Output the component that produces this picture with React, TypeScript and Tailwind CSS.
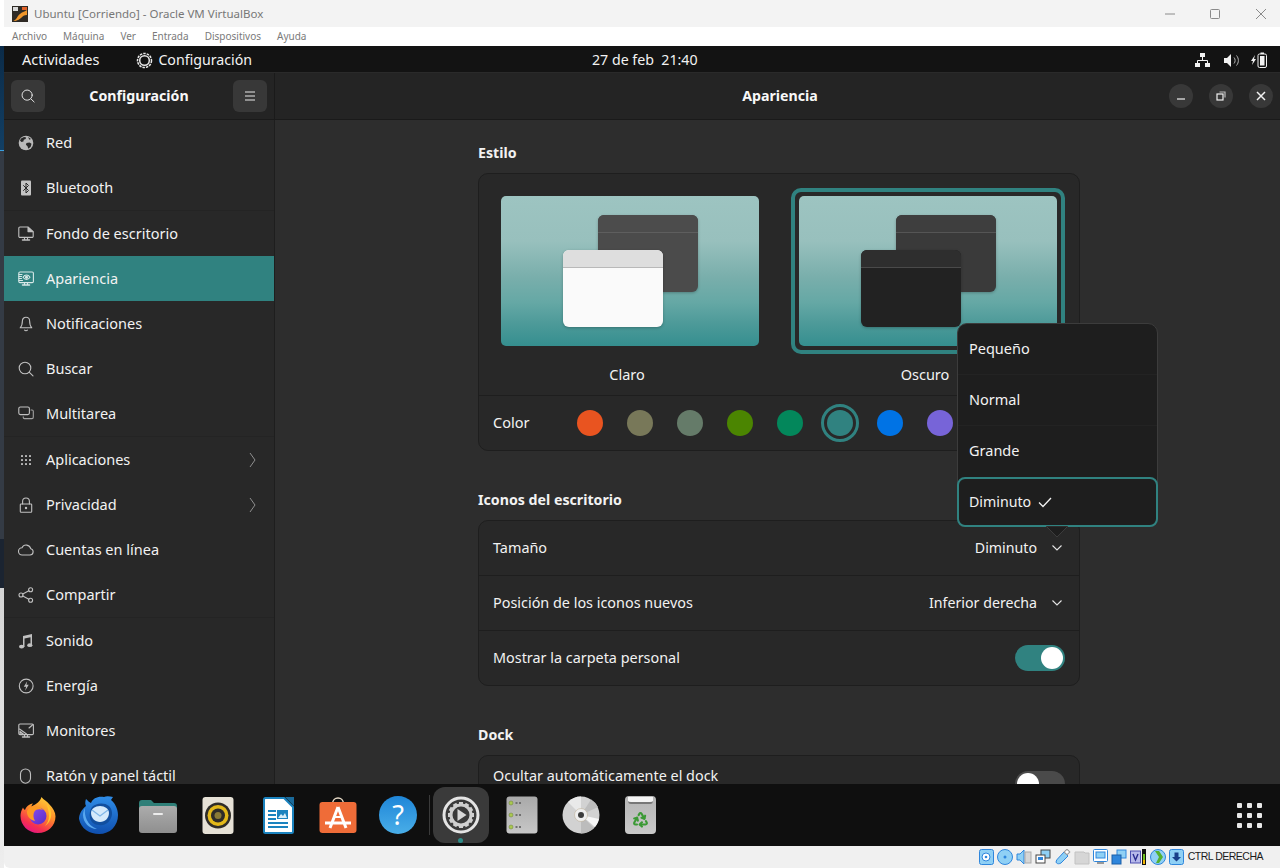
import { Recycle } from 'lucide-react';
import type { ReactNode } from 'react';

function Glyph({ children, size = 16 }: { children: ReactNode; size?: number }) {
  return (
    <svg width={size} height={size} viewBox="0 0 16 16" fill="none" stroke="currentColor" strokeWidth="1.1" strokeLinecap="round" strokeLinejoin="round">
      {children}
    </svg>
  );
}

const sideIcons: Record<string, ReactNode> = {
  red: (
    <>
      <circle cx="8" cy="8" r="7.3" fill="#b9b9b9" stroke="none" />
      <path d="M3 3.5l3-1.6 2.2.6-.6 1.6-1.8.6-.4 1.8-2 .6L2 5.6zM8.5 8l3-.6 2 1.4-.8 3-2.4 2-.8-2.6-1.6-1.4zM10 2l3 2-1.6.8z" fill="#282828" stroke="none" />
    </>
  ),
  bluetooth: (
    <>
      <rect x="3" y="0.5" width="10" height="15" rx="1" fill="#c4c4c4" stroke="none" />
      <path d="M5.5 5.5l5 5L8 13V3l2.5 2.5-5 5" stroke="#282828" strokeWidth="1" />
    </>
  ),
  fondo: (
    <>
      <path d="M9.5 1H2a1.2 1.2 0 0 0-1.2 1.2v8A1.2 1.2 0 0 0 2 11.4h12a1.2 1.2 0 0 0 1.2-1.2V6" />
      <path d="M10 1l5.2 4.6H10z" fill="currentColor" />
      <path d="M6.5 11.5v2M9.5 11.5v2" />
      <path d="M4.5 14h7" strokeWidth="1.5" />
    </>
  ),
  apariencia: (
    <>
      <rect x="0.8" y="1" width="14.6" height="10.6" rx="1.2" />
      <path d="M5 6.3c2-3 5-3 7 0-2 3-5 3-7 0z" />
      <circle cx="8.5" cy="6.3" r="1" fill="currentColor" />
      <path d="M1 3.5h3M1 5.5h2.5M1 7.5h2.5M1 9.5h3.5" />
      <path d="M4.5 14h7" strokeWidth="1.5" />
      <path d="M6.5 11.5v2M9.5 11.5v2" />
    </>
  ),
  bell: (
    <>
      <path d="M8 1.2a3.6 3.6 0 0 0-3.6 3.6c0 4-.9 5.7-2.2 7h11.6c-1.3-1.3-2.2-3-2.2-7A3.6 3.6 0 0 0 8 1.2z" />
      <path d="M6.6 14.2c.7.8 2.1.8 2.8 0" />
    </>
  ),
  buscar: (
    <>
      <circle cx="7" cy="7" r="5.8" />
      <path d="M11.4 11.4l3.6 3.4" />
    </>
  ),
  multi: (
    <>
      <rect x="0.8" y="1" width="10.6" height="7.6" rx="1.6" />
      <path d="M13 4h1a1.3 1.3 0 0 1 1.3 1.3v6a1.3 1.3 0 0 1-1.3 1.3H6.5A1.3 1.3 0 0 1 5.2 11.3V10.8" stroke="#a0a0a0" />
    </>
  ),
  apps: (
    <g fill="currentColor" stroke="none">
      {[4, 8, 12].flatMap((x) => [4, 8, 12].map((y) => <rect key={`${x}-${y}`} x={x - 1} y={y - 1} width="2" height="2" rx="0.4" />))}
    </g>
  ),
  lock: (
    <>
      <path d="M4.6 7V4.4a3.4 3.4 0 0 1 6.8 0V7" />
      <rect x="2.3" y="7" width="11.4" height="8.2" rx="0.8" />
      <circle cx="8" cy="11" r="1.2" fill="currentColor" stroke="none" />
    </>
  ),
  cloud: <path d="M4.2 13H12a3.2 3.2 0 0 0 .7-6.3A4.6 4.6 0 0 0 4 5.8 3.6 3.6 0 0 0 4.2 13z" />,
  share: (
    <>
      <circle cx="3" cy="8" r="2" />
      <circle cx="12.6" cy="2.8" r="2" />
      <circle cx="12.6" cy="13.2" r="2" />
      <path d="M4.8 7l6-3.2M4.8 9l6 3.2" />
    </>
  ),
  music: (
    <g fill="currentColor" stroke="none">
      <path d="M5 3l9-2v11h-1.5V4.2L6.5 5.5V14H5z" />
      <ellipse cx="3.6" cy="13.6" rx="2.6" ry="1.9" />
      <ellipse cx="11.8" cy="12.2" rx="2.6" ry="1.9" />
    </g>
  ),
  power: (
    <>
      <circle cx="8.2" cy="8" r="6.9" />
      <path d="M9.2 3.2L5.8 8.8h2.3l-1 4 3.6-6H8.4z" fill="currentColor" stroke="none" />
    </>
  ),
  monitor: (
    <>
      <rect x="0.8" y="1" width="14.6" height="10.6" rx="1.2" />
      <path d="M1.5 6l7 5M15 1.5L11 5M2 8.5l3.5 2.6H2z" />
      <path d="M4.5 14h7" strokeWidth="1.5" />
      <path d="M6.5 11.5v2M9.5 11.5v2" />
    </>
  ),
  mouse: <rect x="2.5" y="1" width="10" height="14.2" rx="5" />,
};

type SideItem = { label: string; icon: string; arrow?: boolean; active?: boolean; rule?: boolean };

const sideItems: SideItem[] = [
  { label: 'Red', icon: 'red' },
  { label: 'Bluetooth', icon: 'bluetooth', rule: true },
  { label: 'Fondo de escritorio', icon: 'fondo' },
  { label: 'Apariencia', icon: 'apariencia', active: true },
  { label: 'Notificaciones', icon: 'bell' },
  { label: 'Buscar', icon: 'buscar' },
  { label: 'Multitarea', icon: 'multi', rule: true },
  { label: 'Aplicaciones', icon: 'apps', arrow: true },
  { label: 'Privacidad', icon: 'lock', arrow: true },
  { label: 'Cuentas en línea', icon: 'cloud' },
  { label: 'Compartir', icon: 'share', rule: true },
  { label: 'Sonido', icon: 'music' },
  { label: 'Energía', icon: 'power' },
  { label: 'Monitores', icon: 'monitor' },
  { label: 'Ratón y panel táctil', icon: 'mouse' },
];

function Sidebar() {
  return (
    <aside className="flex w-[271px] shrink-0 flex-col overflow-hidden border-r border-[#1e1e1e] bg-[#282828]">
      {sideItems.map((item) => (
        <div key={item.label} className="shrink-0">
          <div className={`flex h-[45px] items-center pl-[14px] pr-[18px] text-[#f2f2f2] ${item.active ? 'bg-[#308280]' : ''}`}>
            <span className={`w-[28px] shrink-0 ${item.active ? 'text-[#d8e8e7]' : 'text-[#c0c0c0]'}`}>
              <Glyph>{sideIcons[item.icon]}</Glyph>
            </span>
            <span className="flex-1">{item.label}</span>
            {item.arrow && (
              <svg width="7" height="16" viewBox="0 0 7 16" fill="none" stroke="#8f8f8f" strokeWidth="1">
                <path d="M1 1l5 7-5 7" />
              </svg>
            )}
          </div>
          {item.rule && <div className="h-px bg-[#242424]" />}
        </div>
      ))}
    </aside>
  );
}

function PreviewWindow({ dark, back }: { dark: boolean; back?: boolean }) {
  const body = back ? (dark ? 'bg-[#3a3a3a]' : 'bg-[#4b4b4b]') : dark ? 'bg-[#222222]' : 'bg-[#fafafa]';
  const bar = back
    ? dark ? 'bg-[#3e3e3e] border-[#555555]' : 'bg-[#4c4c4c] border-[#5e5e5e]'
    : dark ? 'bg-[#2e2e2e] border-[#4a4a4a]' : 'bg-[#dedede] border-[#b9b9b9]';
  const place = back ? 'left-[97px] top-[19px]' : 'left-[62px] top-[54px]';
  return (
    <div className={`absolute h-[77px] w-[100px] overflow-hidden rounded-[6px] shadow-[0_1px_3px_rgba(0,0,0,0.25)] ${body} ${place}`}>
      <div className={`h-[18px] border-b ${bar}`} />
    </div>
  );
}

function StyleOption({ label, dark, selected }: { label: string; dark: boolean; selected?: boolean }) {
  return (
    <div className="w-[274px]">
      <div className={`flex h-[166px] items-center justify-center rounded-[10px] border-4 ${selected ? 'border-[#308280]' : 'border-transparent'}`}>
        <div className="relative h-[150px] w-[258px] rounded-[5px] bg-[linear-gradient(180deg,#9dc4c1_0%,#98c0bd_30%,#78aeab_55%,#65a8a5_71%,#4d9a99_85%,#358f8f_100%)]">
          <PreviewWindow dark={dark} back />
          <PreviewWindow dark={dark} />
        </div>
      </div>
      <div className="mt-[10px] pr-[6px] text-center leading-5 text-[#f2f2f2]">{label}</div>
    </div>
  );
}

const accents = ['bg-[#e95420]', 'bg-[#787859]', 'bg-[#657b69]', 'bg-[#4b8501]', 'bg-[#03875b]', 'bg-[#308280]', 'bg-[#0073e5]', 'bg-[#7764d8]', 'bg-[#b34cb3]', 'bg-[#da3450]'];

function Chevron() {
  return (
    <svg width="10" height="6" viewBox="0 0 10 6" fill="none" stroke="#e6e6e6" strokeWidth="1.1" className="ml-[15px] mr-[3px]">
      <path d="M0.5 0.5L5 5l4.5-4.5" />
    </svg>
  );
}

function Toggle({ on }: { on: boolean }) {
  return (
    <div className={`flex h-[26px] w-[50px] items-center rounded-full px-[2px] ${on ? 'justify-end bg-[#308280]' : 'justify-start bg-[#4a4a4a]'}`}>
      <div className="h-[22px] w-[22px] rounded-full bg-white" />
    </div>
  );
}

function Row({ label, children, rule }: { label: string; children: ReactNode; rule?: boolean }) {
  return (
    <div className={`flex items-center justify-between pl-[14px] pr-[14px] text-[#f2f2f2] ${rule ? 'h-[55px] border-b border-[#1e1e1e]' : 'h-[54px]'}`}>
      <span className="text-[14.4px]">{label}</span>
      <div className="flex items-center text-[14.2px]">{children}</div>
    </div>
  );
}

function Appearance() {
  const heading = 'mb-[10px] pt-px text-[14.2px] font-bold leading-5 text-[#f2f2f2]';
  return (
    <main className="h-full overflow-hidden bg-[#2d2d2d] pl-[203px] pt-[22px]">
      <div className="w-[602px]">
        <h2 className={heading}>Estilo</h2>
        <section className="rounded-[10px] border border-[#1e1e1e] bg-[#282828]">
          <div className="flex gap-[24px] border-b border-[#1e1e1e] pb-[11px] pl-[14px] pt-[14px]">
            <StyleOption label="Claro" dark={false} />
            <StyleOption label="Oscuro" dark selected />
          </div>
          <div className="flex h-[54px] items-center pl-[14px] text-[#f2f2f2]">
            <span className="w-[84px]">Color</span>
            <div className="flex gap-[24px]">
              {accents.map((c, i) => (
                <div key={c} className={`h-[26px] w-[26px] rounded-full ${c} ${i === 5 ? 'outline-[3px] outline-offset-[3px] outline-[#308280]' : ''}`} />
              ))}
            </div>
          </div>
        </section>

        <h2 className={`mt-[38px] ${heading}`}>Iconos del escritorio</h2>
        <section className="rounded-[10px] border border-[#1e1e1e] bg-[#282828]">
          <Row label="Tamaño" rule>
            <span>Diminuto</span>
            <Chevron />
          </Row>
          <Row label="Posición de los iconos nuevos" rule>
            <span>Inferior derecha</span>
            <Chevron />
          </Row>
          <Row label="Mostrar la carpeta personal">
            <Toggle on />
          </Row>
        </section>

        <h2 className={`mt-[38px] ${heading}`}>Dock</h2>
        <section className="rounded-[10px] border border-[#1e1e1e] bg-[#282828]">
          <div className="flex h-[60px] justify-between pl-[14px] pr-[14px] pt-[15px] text-[#f2f2f2]">
            <span className="text-[14.4px] leading-[10px]">Ocultar automáticamente el dock</span>
            <Toggle on={false} />
          </div>
        </section>
      </div>
    </main>
  );
}

function SizePopover() {
  return (
    <div className="absolute left-[957px] top-[323px] w-[201px] text-[#f2f2f2]">
      <div className="rounded-[10px] border border-[#3c3c3c] bg-[#1e1e1e]">
        <div className="flex h-[51px] items-center border-b border-[#232323] pl-[11px]">Pequeño</div>
        <div className="flex h-[51px] items-center border-b border-[#232323] pl-[11px]">Normal</div>
        <div className="flex h-[51px] items-center pb-[2px] pl-[11px]">Grande</div>
        <div className="-mx-px -mb-px flex h-[50px] items-center gap-[7px] rounded-[8px] border-2 border-[#308280] pl-[10px]">
          <span className="text-[14.2px]">Diminuto</span>
          <svg width="14" height="11" viewBox="0 0 14 11" fill="none" stroke="#f2f2f2" strokeWidth="1.3">
            <path d="M1 5.5L5 9.5 13 1" />
          </svg>
        </div>
      </div>
      <svg width="24" height="12" viewBox="0 0 24 12" className="absolute left-[88px] top-[203px]">
        <path d="M1 0l11 11L23 0z" fill="#1e1e1e" stroke="#3c3c3c" />
      </svg>
    </div>
  );
}

function IconFirefox() {
  return (
    <svg width="36" height="36" viewBox="0 0 36 36">
      <defs>
        <linearGradient id="ffa" x1="0.8" y1="0" x2="0.3" y2="1">
          <stop offset="0" stopColor="#ffd43a" />
          <stop offset="0.45" stopColor="#ff8a2a" />
          <stop offset="0.8" stopColor="#f5304f" />
          <stop offset="1" stopColor="#e31587" />
        </linearGradient>
        <linearGradient id="ffb" x1="0" y1="0" x2="1" y2="1">
          <stop offset="0" stopColor="#8a4ff0" />
          <stop offset="1" stopColor="#5a2bc4" />
        </linearGradient>
      </defs>
      <path d="M18 36C8 36 0.5 28 0.5 19c0-3 1-6 2.5-8.5.5 1 1 2 2 2.5 1-3 4-6 8-6.5-1 1-1.5 2-1.5 3C16 7 20 5 21.5 0c2 3 5.5 4 8 7.5 3.5 3.5 6 7.5 6 12C35.5 28.5 28 36 18 36z" fill="url(#ffa)" />
      <circle cx="18" cy="19" r="8.5" fill="url(#ffb)" />
      <path d="M7 14c2-4 8-6 12-4 3 1 4 3 4 3-3-1.5-7-1-8.5 1.5C13 17 13 21 15 24 10 23 6.5 19 7 14z" fill="#ff9a22" />
      <path d="M27 7c3 3 5 8 4 13-1 4-3 7-6 9 2.5-3 4-6 4-10 0-5-2-9-2-12z" fill="#ffc52e" />
    </svg>
  );
}

function IconThunderbird() {
  return (
    <svg width="42" height="40" viewBox="0 0 42 40">
      <defs>
        <linearGradient id="tba" x1="0" y1="0" x2="0" y2="1">
          <stop offset="0" stopColor="#2f8de8" />
          <stop offset="1" stopColor="#0f4fae" />
        </linearGradient>
      </defs>
      <path d="M8 4c-1 3-1 5 0 7C3 15 1 20 1 24c2 10 11 15 20 15 11 0 19-8 19-19 0-7-4-13-7-15l2-3c-4-1-7-1-9 0-6-1-11 1-13 6-2-1-3-2-5-4z" fill="url(#tba)" />
      <path d="M14 12c4-4 12-5 17-1 3 3 4 8 2 12-2 5-7 8-12 7-5 0-8-3-9-7-1-4 0-8 2-11z" fill="#114f9f" />
      <path d="M13 18c0-4 4-7 9-7s9 3 9 7c0 5-4 9-9 9s-9-4-9-9z" fill="#d4e9fb" />
      <path d="M14 15l8 6 8-6" fill="none" stroke="#7fb6e8" strokeWidth="1.2" />
      <path d="M7 13c-1 8 2 17 12 21-8 0-14-7-14-14 0-3 1-5 2-7z" fill="#5aa9f0" />
    </svg>
  );
}

function IconFiles() {
  return (
    <svg width="38" height="35" viewBox="0 0 38 35">
      <defs>
        <linearGradient id="fl" x1="0" y1="0" x2="0" y2="1">
          <stop offset="0" stopColor="#acacac" />
          <stop offset="1" stopColor="#8f8f8f" />
        </linearGradient>
      </defs>
      <path d="M0 5a3 3 0 0 1 3-3h9l3 3h20a3 3 0 0 1 3 3v8H0z" fill="#2f7f78" />
      <rect x="0" y="8" width="38" height="27" rx="3" fill="url(#fl)" />
      <rect x="14" y="15" width="10" height="2" rx="1" fill="#ececec" />
    </svg>
  );
}

function IconRhythmbox() {
  return (
    <svg width="32" height="37" viewBox="0 0 32 37">
      <rect width="31" height="37" x="0.5" rx="3" fill="#e6e1d6" />
      <circle cx="16" cy="18.5" r="13" fill="#2e2c28" />
      <circle cx="16" cy="18.5" r="10.5" fill="#e3b91a" />
      <circle cx="16" cy="18.5" r="7" fill="#2e2c28" />
      <circle cx="16" cy="18.5" r="3.5" fill="#8a7a36" />
    </svg>
  );
}

function IconWriter() {
  return (
    <svg width="31" height="37" viewBox="0 0 31 37">
      <path d="M1 2.5A1.5 1.5 0 0 1 2.5 1H21l9 9v24.5a1.5 1.5 0 0 1-1.5 1.5h-26A1.5 1.5 0 0 1 1 34.5z" fill="#fff" stroke="#1b83bf" strokeWidth="2" />
      <path d="M22 0l9 9V0z" fill="#1a6a9a" />
      <rect x="5" y="13" width="8" height="2" fill="#1b83bf" />
      <rect x="5" y="17" width="8" height="2" fill="#1b83bf" />
      <rect x="5" y="21" width="8" height="2" fill="#1b83bf" />
      <rect x="14" y="13" width="11" height="9" fill="#1b83bf" />
      <path d="M15 21l3-4 2 2 2-3 2 5z" fill="#d8eef9" />
      <rect x="5" y="25" width="20" height="2" fill="#1b83bf" />
      <rect x="5" y="29" width="20" height="2" fill="#1b83bf" />
    </svg>
  );
}

function IconStore() {
  return (
    <svg width="38" height="37" viewBox="0 0 38 37">
      <path d="M13.5 7c0-8 11-8 11 0" fill="none" stroke="#e9dcc8" strokeWidth="1.5" />
      <rect y="5" width="37" height="31" rx="3" x="0.5" fill="#ef6c38" />
      <path d="M19 10L11 31M19 10l8 21M6 26h26" fill="none" stroke="#fff" strokeWidth="3" />
      <path d="M14 20h10" stroke="#fff" strokeWidth="2" />
    </svg>
  );
}

function IconHelp() {
  return (
    <div className="flex h-[38px] w-[38px] items-center justify-center rounded-full bg-[linear-gradient(180deg,#1f86d8,#49aee8)] text-[27px] leading-[38px] text-white">?</div>
  );
}

function IconSettings() {
  const teeth = Array.from({ length: 12 }, (_, i) => i * 30);
  return (
    <svg width="38" height="38" viewBox="0 0 38 38">
      <circle cx="19" cy="19" r="17" fill="none" stroke="#e4e4e4" strokeWidth="3" />
      <circle cx="19" cy="19" r="10" fill="none" stroke="#cfcfcf" strokeWidth="3" />
      {teeth.map((a) => (
        <rect key={a} x="17" y="6" width="4" height="4" fill="#cfcfcf" transform={`rotate(${a} 19 19)`} />
      ))}
      <path d="M15.5 13l9 6-9 6z" fill="#d8d8d8" />
    </svg>
  );
}

function IconServer() {
  return (
    <svg width="32" height="38" viewBox="0 0 32 38">
      <defs>
        <linearGradient id="sv" x1="0" y1="0" x2="0" y2="1">
          <stop offset="0" stopColor="#a9a9a9" />
          <stop offset="1" stopColor="#c7c7c7" />
        </linearGradient>
      </defs>
      <rect width="31" height="37" x="0.5" y="0.5" rx="3" fill="url(#sv)" />
      {[7, 19, 31].map((y) => (
        <g key={y}>
          <circle cx="5" cy={y} r="2" fill="#a9c94f" stroke="#6d7d3a" strokeWidth="0.5" />
          <rect x="9.5" y={y - 1} width="2" height="2" fill="#707070" />
          <rect x="13" y={y - 1} width="2" height="2" fill="#707070" />
        </g>
      ))}
    </svg>
  );
}

function IconDisc() {
  return (
    <svg width="38" height="38" viewBox="0 0 38 38">
      <circle cx="19" cy="19" r="18.5" fill="#d2d2d2" />
      <path d="M19 19L6 6A18.5 18.5 0 0 1 19 0.5z" fill="#e9e9e9" />
      <path d="M19 19L32 32A18.5 18.5 0 0 1 19 37.5z" fill="#bcbcbc" />
      <path d="M19 19L36 11A18.5 18.5 0 0 0 29 3.5z" fill="#bdbdbd" />
      <path d="M19 19L37 23A18.5 18.5 0 0 1 33 31z" fill="#f6f6f6" />
      <circle cx="19" cy="19" r="6.5" fill="#efefef" stroke="#b9a98c" strokeWidth="0.5" />
      <circle cx="19" cy="19" r="3" fill="#3d3d3d" />
    </svg>
  );
}

function IconTrash() {
  return (
    <div className="relative h-[38px] w-[31px] rounded-[4px] bg-[linear-gradient(180deg,#b5b5b5,#c9c9c9)]">
      <div className="absolute left-[3px] top-[1px] h-[7px] w-[25px] rounded-b-[3px] border-b-2 border-[#777777] bg-[#f4f4f4]" />
      <Recycle className="absolute left-[7px] top-[15px] h-[17px] w-[17px] text-[#3b9a35]" strokeWidth={3} />
    </div>
  );
}

function Dock() {
  return (
    <div className="relative flex h-[62px] shrink-0 items-center bg-[#0f0f0f] pl-[16px]">
      <div className="w-[58px]"><IconFirefox /></div>
      <div className="w-[61px]"><IconThunderbird /></div>
      <div className="w-[63px]"><IconFiles /></div>
      <div className="w-[61px]"><IconRhythmbox /></div>
      <div className="w-[56px]"><IconWriter /></div>
      <div className="w-[60px]"><IconStore /></div>
      <div className="w-[50px]"><IconHelp /></div>
      <div className="h-[40px] w-px bg-[#3a3a3a]" />
      <div className="relative ml-[3px] flex h-[56px] w-[56px] items-center justify-center rounded-[12px] bg-[#3a3a3a]">
        <IconSettings />
        <div className="absolute bottom-[0px] left-[25px] h-[5px] w-[5px] rounded-full bg-[#2d8c88]" />
      </div>
      <div className="ml-[17px] w-[56px]"><IconServer /></div>
      <div className="w-[63px]"><IconDisc /></div>
      <IconTrash />
      <div className="ml-auto mr-[18px] grid grid-cols-3 gap-[5px]">
        {Array.from({ length: 9 }, (_, i) => (
          <div key={i} className="h-[5px] w-[5px] rounded-[1px] bg-[#e8e8e8]" />
        ))}
      </div>
    </div>
  );
}

function StatusIcons() {
  const blue = '#2f86dc';
  const light = '#8fd0f5';
  return (
    <div className="flex items-center gap-[3.2px]">
      <svg width="15" height="16" viewBox="0 0 15 16"><rect x="0.5" y="0.5" width="14" height="15" rx="2" fill={light} stroke={blue} /><circle cx="7" cy="8" r="4" fill="#fff" stroke={blue} /><circle cx="7" cy="8" r="1.3" fill={blue} /></svg>
      <svg width="16" height="16" viewBox="0 0 16 16"><circle cx="8" cy="8" r="7.5" fill={light} stroke={blue} /><circle cx="8" cy="8" r="1.5" fill={blue} /></svg>
      <svg width="16" height="16" viewBox="0 0 16 16"><path d="M1 5h3l4-4v14l-4-4H1z" fill={light} stroke={blue} /><rect x="9" y="3" width="6" height="11" fill="#d6d6d6" stroke="#aaa" /></svg>
      <svg width="16" height="16" viewBox="0 0 16 16"><rect x="6" y="1" width="9" height="8" fill={light} stroke="#444" /><rect x="1" y="6" width="9" height="8" fill="#fff" stroke="#444" /><rect x="3" y="8" width="5" height="3" fill={blue} /></svg>
      <svg width="16" height="16" viewBox="0 0 16 16"><path d="M9 3l4 4-7 7c-1.5 1-3.5 1-4.5 0-1-1 0-3 1-4z" fill={light} stroke={blue} /><rect x="10" y="1" width="4" height="4" transform="rotate(45 12 3)" fill="#fff" stroke="#999" /></svg>
      <svg width="16" height="16" viewBox="0 0 16 16"><path d="M1 3h9l1 1h4v11H1z" fill="#d6d6d6" stroke="#c2c2c2" /></svg>
      <svg width="15" height="16" viewBox="0 0 15 16"><rect x="0.5" y="0.5" width="14" height="12" rx="1" fill="#fff" stroke={blue} /><rect x="3" y="3" width="9" height="6" fill={light} stroke={blue} /><rect x="4" y="13" width="7" height="2" fill="#999" /></svg>
      <svg width="16" height="16" viewBox="0 0 16 16"><rect x="6" y="1" width="9" height="8" fill={light} stroke={blue} /><rect x="1" y="6" width="9" height="9" fill={blue} stroke="#1a5fa8" /></svg>
      <svg width="16" height="16" viewBox="0 0 16 16"><rect x="0.5" y="2" width="10" height="12" fill="#b7b9ea" stroke="#4d4fb0" /><path d="M3 5l2.5 6L8 5" fill="none" stroke="#2a2c90" strokeWidth="1.4" /><rect x="12" y="0" width="4" height="16" fill="#111" /><rect x="13" y="5" width="2" height="6" fill="#6ec11f" /><rect x="13" y="11" width="2" height="4" fill="#f2b705" /></svg>
      <svg width="16" height="16" viewBox="0 0 16 16"><circle cx="8" cy="8" r="7.5" fill={light} stroke={blue} /><path d="M5 2h4l4 6-4 6H6l3-6z" fill="#54b030" /></svg>
      <svg width="15" height="16" viewBox="0 0 15 16"><rect x="0.5" y="0.5" width="14" height="15" rx="2" fill={light} stroke={blue} /><path d="M5.5 3.5h4V8H12l-4.500 4.500L3 8h2.500z" fill="#1a3f8a" /></svg>
    </div>
  );
}

function DesktopEdge() {
  return (
    <div className="flex w-[4px] shrink-0 flex-col">
      <div className="h-[46px] bg-white" />
      <div className="h-[104px] bg-[linear-gradient(180deg,#0b2b48,#123f64)]" />
      <div className="h-px bg-[#3aa0e0]" />
      <div className="h-[388px] bg-[#343b45]" />
      <div className="h-[49px] bg-[#1b2431]" />
      <div className="flex-1 bg-[linear-gradient(180deg,#d4d4d4,#eeeeee)]" />
    </div>
  );
}

export default function App() {
  return (
    <div className="relative flex h-[868px] w-[1280px] overflow-hidden bg-white font-['Noto_Sans',sans-serif] text-[14.5px]">
      <DesktopEdge />
      <div className="flex min-w-0 flex-1 flex-col">
        <div className="flex h-[27px] shrink-0 items-center bg-[#f3f3f3] pl-[8px] pr-[14px] text-[11.5px] text-[#777777]">
          <svg width="16" height="16" viewBox="0 0 16 16" className="mr-[6px]">
            <rect width="16" height="16" fill="#2e2a25" />
            <path d="M1 15c4-1 4-5 7-7 2-2 4-2 7-4v5c-3 0-4 1-6 3-2 1-3 3-8 3z" fill="#f0962a" />
            <rect x="1" y="1" width="5" height="4" fill="#d9d9d9" />
            <path d="M10 1h5v3h-5z" fill="#e1632a" />
          </svg>
          <span className="flex-1">Ubuntu [Corriendo] - Oracle VM VirtualBox</span>
          <svg width="112" height="12" viewBox="0 0 112 12" fill="none" stroke="#8a8a8a" strokeWidth="1">
            <path d="M11 6h10" />
            <rect x="56.5" y="1.5" width="9" height="9" rx="1" />
            <path d="M102 1l10 10M112 1l-10 10" />
          </svg>
        </div>
        <div className="flex h-[19px] shrink-0 items-center gap-[16px] bg-white pl-[8px] text-[10px] text-[#7a7a7a]">
          <span>Archivo</span>
          <span>Máquina</span>
          <span>Ver</span>
          <span>Entrada</span>
          <span>Dispositivos</span>
          <span>Ayuda</span>
        </div>
        <div className="relative flex h-[27px] shrink-0 items-center border-b border-[#2a2a2a] bg-[#131313] pl-[18px] pr-[13px] pt-[2px] text-[#f2f2f2]">
          <span>Actividades</span>
          <svg width="17" height="17" viewBox="0 0 17 17" fill="none" stroke="#e8e8e8" className="ml-[37px] mr-[5px]">
            <circle cx="8.5" cy="8.5" r="4.8" strokeWidth="1.5" />
            <circle cx="8.5" cy="8.5" r="7" strokeWidth="1.5" strokeDasharray="2.5 1" />
          </svg>
          <span className="text-[14.2px]">Configuración</span>
          <span className="absolute left-[588px] top-[3px] text-[14.2px]">27 de feb&nbsp;&nbsp;21:40</span>
          <div className="ml-auto flex items-center">
            <svg width="15" height="15" viewBox="0 0 15 15" fill="#f2f2f2">
              <rect x="5" y="0" width="5" height="4" />
              <rect x="0" y="10" width="5" height="4" />
              <rect x="10" y="10" width="5" height="4" />
              <path d="M7.5 4v3M2.5 10V7.5h10V10" fill="none" stroke="#f2f2f2" />
            </svg>
            <svg width="15" height="15" viewBox="0 0 15 15" fill="#f2f2f2" className="ml-[14px]">
              <path d="M0 5h3l4-4v13l-4-4H0z" />
              <path d="M10 4.5c1.5 1.5 1.5 4.5 0 6M12.5 2.5c2.5 3 2.5 7 0 10" fill="none" stroke="#b5b5b5" />
            </svg>
            <svg width="16" height="16" viewBox="0 0 16 16" fill="none" className="ml-[12px]">
              <path d="M4 3L0 9h2l-1 4 4-6H3z" fill="#f2f2f2" />
              <rect x="7" y="2" width="8.5" height="13.5" rx="1.5" stroke="#f2f2f2" />
              <rect x="9" y="4" width="4.5" height="9.5" fill="#f2f2f2" />
              <rect x="9.5" y="0.5" width="3.5" height="1.5" fill="#f2f2f2" />
            </svg>
          </div>
        </div>

        <div className="flex min-h-0 flex-1 flex-col overflow-hidden">
          <header className="flex h-[47px] shrink-0 items-center border-b border-[#1a1a1a] bg-[#242424] text-[14.2px] text-[#f8f8f8]">
            <div className="flex w-[271px] shrink-0 items-center justify-between self-stretch border-r border-[#1a1a1a] px-[7px]">
              <div className="flex h-[32px] w-[34px] items-center justify-center rounded-[6px] bg-[#383838]">
                <span className="text-[#e8e8e8]"><Glyph size={14}>{sideIcons.buscar}</Glyph></span>
              </div>
              <span className="font-bold">Configuración</span>
              <div className="flex h-[32px] w-[34px] items-center justify-center rounded-[6px] bg-[#383838]">
                <svg width="12" height="10" viewBox="0 0 12 10" stroke="#e8e8e8"><path d="M1 1h10M1 5h10M1 9h10" /></svg>
              </div>
            </div>
            <span className="flex-1 pl-[116px] text-center font-bold">Apariencia</span>
            <div className="flex gap-[16px] pr-[7px]">
              <div className="flex h-[24px] w-[24px] items-center justify-center rounded-full bg-[#383838]">
                <svg width="10" height="10" viewBox="0 0 10 10" stroke="#f2f2f2" strokeWidth="1.2"><path d="M1 8h8" /></svg>
              </div>
              <div className="flex h-[24px] w-[24px] items-center justify-center rounded-full bg-[#383838]">
                <svg width="10" height="10" viewBox="0 0 10 10" fill="none" stroke="#f2f2f2" strokeWidth="1.2"><rect x="1" y="3" width="6" height="6" /><path d="M3.5 1H9v5.5" stroke="#bbbbbb" /></svg>
              </div>
              <div className="flex h-[24px] w-[24px] items-center justify-center rounded-full bg-[#383838]">
                <svg width="10" height="10" viewBox="0 0 10 10" stroke="#f2f2f2" strokeWidth="1.5"><path d="M1 1l8 8M9 1L1 9" /></svg>
              </div>
            </div>
          </header>
          <div className="flex min-h-0 flex-1">
            <Sidebar />
            <div className="min-w-0 flex-1"><Appearance /></div>
          </div>
        </div>

        <Dock />
        <div className="flex h-[22px] shrink-0 items-center justify-end rounded-bl-[6px] bg-[#f0f0f0] pr-[17px] font-['Liberation_Sans',sans-serif] text-[10.5px] tracking-[-0.5px] text-[#1a1a1a]">
          <StatusIcons />
          <span className="ml-[4px]">CTRL DERECHA</span>
        </div>
      </div>
      <SizePopover />
    </div>
  );
}
